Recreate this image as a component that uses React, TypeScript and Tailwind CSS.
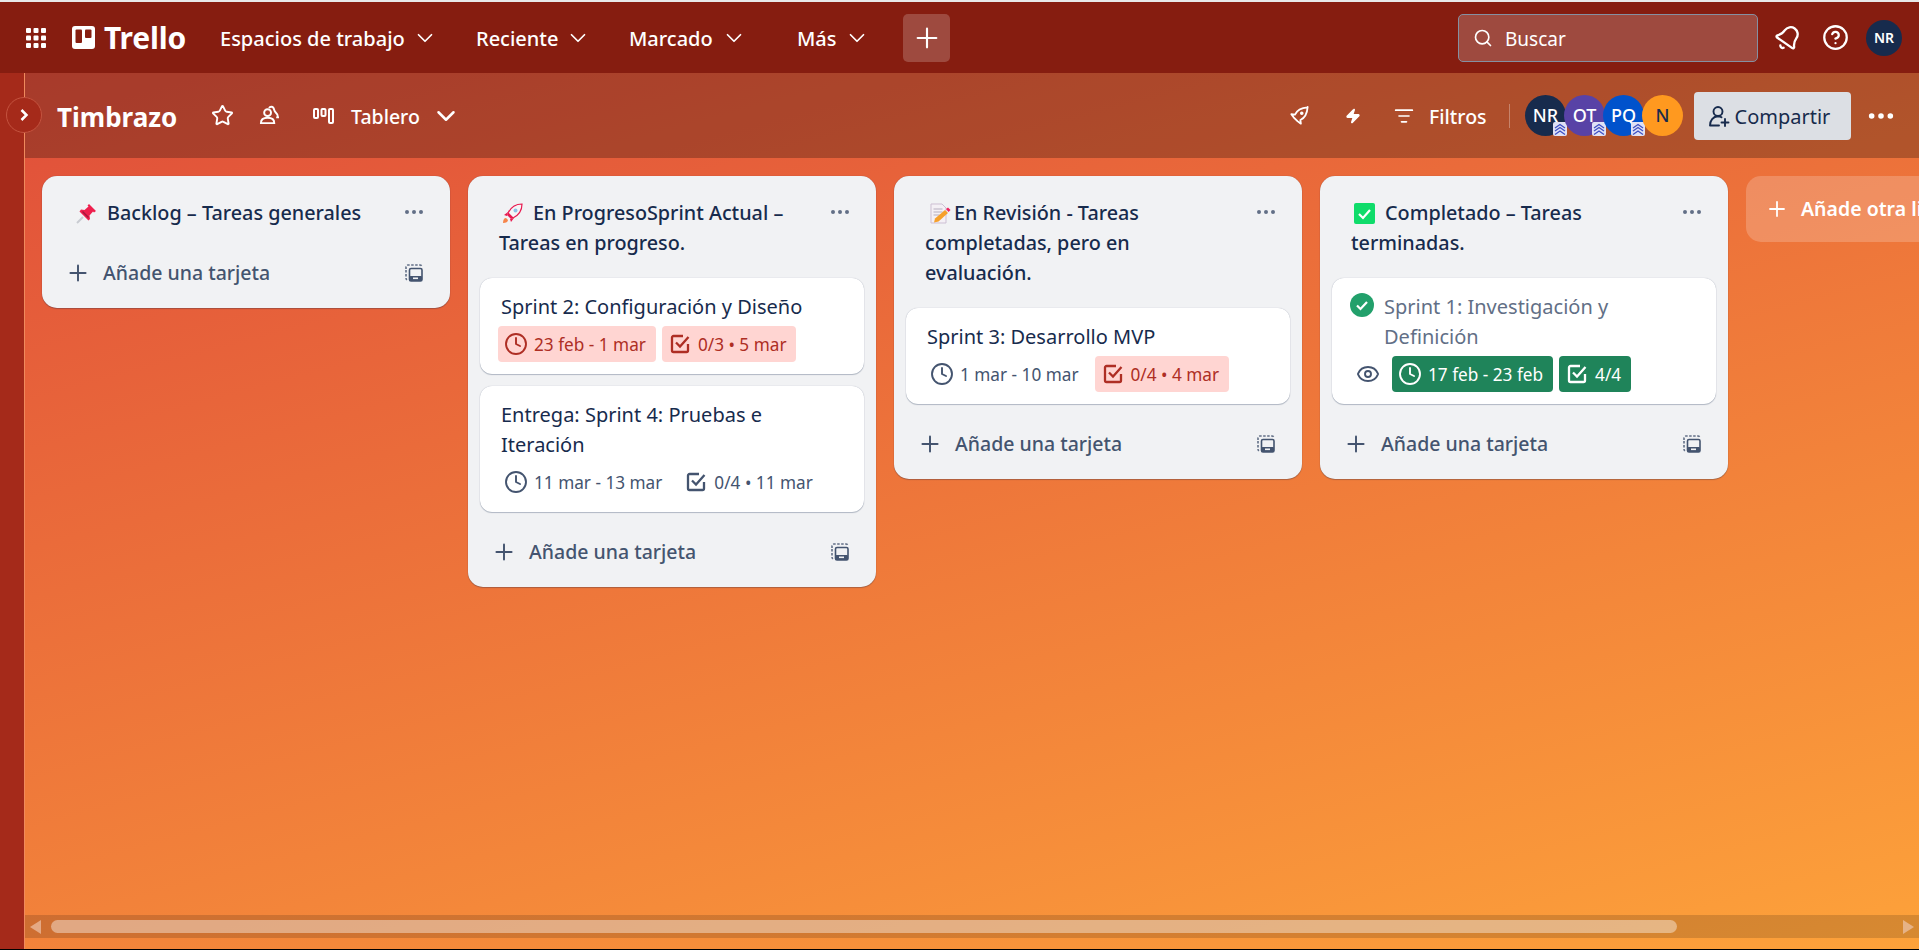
import React from "react";
import { Bell, ChevronDown, CircleHelp, Clock, Ellipsis, Eye, ListFilter, Plus, Search, Star, Zap } from "lucide-react";

const GridIcon = () => (
    <svg width="20" height="20" viewBox="0 0 20 20" fill="#fff" className="shrink-0">
        {[0, 7.5, 15].map((y) =>
            [0, 7.5, 15].map((x) => <rect key={`${x}-${y}`} x={x} y={y} width="5" height="5" rx="1" />)
        )}
    </svg>
);

const TrelloLogo = () => (
    <svg width="23" height="23" viewBox="0 0 23 23" className="shrink-0">
        <rect width="23" height="23" rx="3" fill="#fff" />
        <rect x="3.5" y="3.5" width="6.5" height="13.5" rx="1" fill="#861d10" />
        <rect x="13" y="3.5" width="6.5" height="8.5" rx="1" fill="#861d10" />
    </svg>
);

const BoardIcon = () => (
    <svg width="21" height="16" viewBox="0 0 21 16" fill="none" stroke="#fff" strokeWidth="2" className="shrink-0">
        <rect x="1" y="1" width="4" height="9" rx="1" />
        <rect x="8.5" y="1" width="4" height="7" rx="1" />
        <rect x="16" y="1" width="4" height="14" rx="1" />
    </svg>
);

const PeopleIcon = () => (
    <svg width="21" height="21" viewBox="0 0 22 22" fill="none" stroke="#fff" strokeWidth="2" className="shrink-0">
        <circle cx="9" cy="8" r="3.6" />
        <path d="M2 19c0-3.6 3-5.6 7-5.6s7 2 7 5.6z" />
        <path d="M10.5 3.2c1-1.6 3.5-1.8 4.6-.2 1 1.5.6 3 2 4.300 1.400 1.300 3 3 2.900 5.700h-2" />
    </svg>
);

const RocketIcon = () => (
    <svg width="19" height="19" viewBox="0 0 21 21" fill="none" stroke="#fff" strokeWidth="2" strokeLinejoin="round" className="shrink-0">
        <path d="M19.500 1.500C13 2 7.500 5 5.500 9.500L1.500 9l2.500 3.500 4.500 4.500 3.500 2.500-.5-4c4.500-2 7.500-7.500 8-14.500z" />
        <circle cx="13" cy="8" r="1" fill="#fff" />
    </svg>
);

const ShareIcon = () => (
    <svg width="24" height="24" viewBox="0 0 24 24" fill="none" stroke="#172b4d" strokeWidth="1.900" strokeLinecap="round" className="shrink-0">
        <circle cx="11" cy="7.500" r="4.500" />
        <path d="M3 21.500c0-5 3-9 8-9.200 1.500 0 2.500.4 3.500 1M3 21.500h9" />
        <path d="M18 15v7M14.500 18.500h7" />
    </svg>
);

const CheckIcon = () => (
    <svg width="24" height="24" viewBox="0 0 24 24" fill="none" stroke="currentColor" strokeWidth="2.300" className="shrink-0">
        <path d="M15 4H5.500A1.500 1.500 0 0 0 4 5.500v13A1.500 1.500 0 0 0 5.500 20h13a1.500 1.500 0 0 0 1.500-1.500V12" />
        <path d="M8 10.500l4 4 8.500-9.500" />
    </svg>
);

const TemplateIcon = () => (
    <svg width="18" height="18" viewBox="0 0 18 18" fill="none" className="shrink-0">
        <path d="M1 5V3a2 2 0 0 1 2-2h12a2 2 0 0 1 2 2" stroke="#626f86" strokeWidth="1.600" strokeDasharray="2.500 1.500" />
        <path d="M1 6v8a3 3 0 0 0 .8 2" stroke="#626f86" strokeWidth="1.600" strokeDasharray="2.500 1.500" />
        <rect x="4.500" y="4.500" width="12.500" height="12.500" rx="1.500" stroke="#44546f" strokeWidth="1.600" />
        <rect x="4.500" y="12" width="12.500" height="5" rx="1" fill="#44546f" />
        <rect x="8" y="13.500" width="5" height="1.600" fill="#f1f2f4" />
    </svg>
);

const PinEmoji = () => (
    <svg width="21" height="21" viewBox="0 0 21 21" className="inline-block align-[-4px] ml-[3px] mr-[10px]">
        <path d="M1 20l6-6" stroke="#c9ccd1" strokeWidth="2" />
        <path d="M13 1l7 7-2 1.500-1-1-3.500 4 .5 3.500-1.500 1.500-9-9L5 6.500l3.500.5 4-3.500-1-1z" fill="#ee1f4d" />
        <path d="M7 8l6 6-1 1-6-6z" fill="#a3173d" />
    </svg>
);

const RocketEmoji = () => (
    <svg width="21" height="21" viewBox="0 0 21 21" className="inline-block align-[-4px] ml-[3px] mr-[10px]">
        <path d="M1 20c0-3 1-5 3-5l2 2c0 2-2 3-5 3z" fill="#f6854a" />
        <path d="M20 1c-6 0-11 3-14 9l5 5c6-3 9-8 9-14z" fill="#f5f5f7" stroke="#e8194f" strokeWidth="1.200" />
        <path d="M6 9L2 12l3 1zM12 15l-3 4-1-3z" fill="#e8194f" />
        <path d="M6 10l5 5-2 1-4-4z" fill="#e8194f" />
        <circle cx="13.500" cy="7.500" r="2" fill="#8fc3e8" />
    </svg>
);

const NoteEmoji = () => (
    <svg width="21" height="21" viewBox="0 0 21 21" className="inline-block align-[-4px] ml-[5px] mr-[3px]">
        <path d="M1 1h11l4 4v15H1z" fill="#f4f0f5" stroke="#cdbfd3" />
        <path d="M3.500 6h9M3.500 9h9M3.500 12h6" stroke="#b6adc0" strokeWidth="1.200" />
        <path d="M5 15.500L15 7l3 3-9.500 8.500-4.500 1z" fill="#f6a02b" />
        <path d="M16 6l2-1.500 2.500 2.500-2 2z" fill="#f0245e" />
    </svg>
);

const CheckEmoji = () => (
    <svg width="21" height="21" viewBox="0 0 21 21" className="inline-block align-[-4px] ml-[3px] mr-[10px]">
        <rect width="21" height="21" rx="2" fill="#0fdc6a" />
        <path d="M5 11l4 4 7-8" fill="none" stroke="#fff" strokeWidth="2.200" />
    </svg>
);

const AdminBadge = () => (
    <svg width="14" height="14" viewBox="0 0 14 14" className="absolute right-[-1px] bottom-0">
        <rect width="14" height="14" rx="2" fill="#dfe1f5" />
        <path d="M2 6l5-3.500L12 6M2 9l5-3.500L12 9M2 12.500L7 9l5 3.500" fill="none" stroke="#3f51c4" strokeWidth="1.400" />
    </svg>
);

const Avatar = ({ label, color, dark, admin }: { label: string; color: string; dark?: boolean; admin?: boolean }) => (
    <div
        className={`relative w-[41px] h-[41px] -ml-[2px] first:ml-0 rounded-full flex items-center justify-center text-[18px] font-medium ${dark ? "text-[#172b4d]" : "text-white"}`}
        style={{ backgroundColor: color }}
    >
        {label}
        {admin && <AdminBadge />}
    </div>
);

const NavItem = ({ label, width }: { label: string; width: string }) => (
    <div className="flex items-center">
        <span className={`${width} pt-[3px] font-medium text-[20px] text-white whitespace-nowrap`}>{label}</span>
        <ChevronDown size={26} strokeWidth={1.600} className="text-white -ml-[5px]" />
    </div>
);

const Badge = ({ kind, icon, text }: { kind: "plain" | "red" | "green"; icon: "clock" | "check"; text: string }) => {
    const styles = {
        plain: "text-[#44546f]",
        red: "bg-[#ffd5d2] text-[#ae2e24]",
        green: "bg-[#1f845a] text-white",
    };
    return (
        <div className={`h-[36px] flex items-center gap-[6px] pl-[6px] pr-[10px] rounded-[4px] text-[17.200px] whitespace-nowrap ${styles[kind]}`}>
            {icon === "clock" ? <Clock size={24} strokeWidth={1.900} /> : <CheckIcon />}
            <span className="pt-[2px]">{text}</span>
        </div>
    );
};

const Card = ({ children, lines, done }: { children: React.ReactNode; lines: string[]; done?: boolean }) => (
    <div className="w-[384px] bg-white rounded-[12px] pt-[14px] pb-[12px] shadow-[0_1px_1px_#091e4240,0_0_1px_#091e424f]">
        <div className={`flex text-[20px] leading-[30px] ${done ? "text-[#626f86] pl-[18px]" : "text-[#172b4d] pl-[21px]"}`}>
            {done && (
                <svg width="24" height="24" viewBox="0 0 24 24" className="shrink-0 mr-[10px] mt-[1px]">
                    <circle cx="12" cy="12" r="12" fill="#22a06b" />
                    <path d="M7 12.500l3.500 3.500 6.500-7" fill="none" stroke="#fff" strokeWidth="2.200" />
                </svg>
            )}
            <div>
                {lines.map((l) => (
                    <div key={l}>{l}</div>
                ))}
            </div>
        </div>
        <div className="flex items-center gap-[6px] mt-[4px] pl-[18px]">{children}</div>
    </div>
);

const List = ({ title, children }: { title: React.ReactNode; children?: React.ReactNode }) => (
    <div className="w-[408px] shrink-0 self-start bg-[#f1f2f4] rounded-[15px] shadow-[0_1px_1px_#091e4240,0_0_1px_#091e424f]">
        <div className="flex pt-[22px] pb-[20px] pl-[31px] pr-[24px]">
            <div className="flex-1 pr-[24px] text-[19.800px] leading-[30px] font-medium text-[#172b4d]">{title}</div>
            <Ellipsis size={24} className="shrink-0 text-[#626f86] mt-[2px]" />
        </div>
        {children && <div className="flex flex-col gap-[12px] px-[12px] pb-[15px]">{children}</div>}
        <div className="h-[50px] mb-[10px] pl-[24px] pr-[27px] flex items-center text-[#44546f]">
            <Plus size={26} strokeWidth={1.800} className="-ml-[1px]" />
            <span className="ml-[12px] flex-1 text-[19.500px] font-medium">Añade una tarjeta</span>
            <TemplateIcon />
        </div>
    </div>
);

const App = () => {
    return (
        <div className="w-[1919px] h-[950px] flex flex-col overflow-hidden font-['Noto_Sans',sans-serif]">
            <div className="h-[2px] bg-[#e8e8e8]" />
            <header className="h-[71px] bg-[#861d10] flex items-center pl-[26px] pr-[17px] text-white">
                <GridIcon />
                <div className="ml-[26px]">
                    <TrelloLogo />
                </div>
                <span className="ml-[9px] w-[116px] text-[30px] font-bold tracking-[-0.200px] whitespace-nowrap">Trello</span>
                <NavItem label="Espacios de trabajo" width="w-[197px]" />
                <div className="ml-[38px]">
                    <NavItem label="Reciente" width="w-[94px]" />
                </div>
                <div className="ml-[38px]">
                    <NavItem label="Marcado" width="w-[97px]" />
                </div>
                <div className="ml-[50px]">
                    <NavItem label="Más" width="w-[52px]" />
                </div>
                <div className="ml-[33px] w-[47px] h-[48px] rounded-[5px] bg-white/20 flex items-center justify-center">
                    <Plus size={32} strokeWidth={1.600} />
                </div>
                <div className="ml-auto w-[300px] h-[48px] rounded-[5px] bg-white/20 border border-[#8590a2] flex items-center pl-[14px] text-[19px]">
                    <Search size={20} strokeWidth={2} />
                    <span className="ml-[12px] pt-[3px]">Buscar</span>
                </div>
                <Bell size={28} strokeWidth={2} className="ml-[16px] rotate-[35deg]" />
                <CircleHelp size={27} strokeWidth={2} className="ml-[20px]" />
                <div className="ml-[17px] w-[36px] h-[36px] rounded-full bg-[#172b4d] flex items-center justify-center text-[14px] font-semibold">NR</div>
            </header>
            <div className="flex-1 flex min-h-0 relative">
                <aside className="w-[25px] shrink-0 bg-[#a52a1a] border-r border-[#f08a5d]" />
                <button className="absolute left-[6px] top-[24px] w-[36px] h-[36px] rounded-full bg-[#a52a1a] border border-[#c4533f] flex items-center justify-center">
                    <svg width="10" height="14" viewBox="0 0 10 14" fill="none" stroke="#fff" strokeWidth="2.500">
                        <path d="M2.500 2l5 5-5 5" />
                    </svg>
                </button>
                <main className="flex-1 min-w-0 flex flex-col bg-[linear-gradient(165deg,#e04e3a_0%,#fda23a_100%)]">
                    <div className="h-[85px] shrink-0 bg-black/25 flex items-center pl-[32px] pr-[22.500px] text-white">
                        <span className="w-[119px] pt-[3px] text-[26px] font-bold whitespace-nowrap">Timbrazo</span>
                        <Star size={23} strokeWidth={2} className="ml-[35px]" />
                        <div className="ml-[25px]">
                            <PeopleIcon />
                        </div>
                        <div className="ml-[33px]">
                            <BoardIcon />
                        </div>
                        <span className="ml-[17px] w-[72px] pt-[3px] text-[19.500px] font-medium">Tablero</span>
                        <ChevronDown size={30} strokeWidth={2} className="ml-[8px]" />
                        <div className="ml-auto">
                            <RocketIcon />
                        </div>
                        <Zap size={16} strokeWidth={2} fill="#fff" className="ml-[36px]" />
                        <ListFilter size={20} strokeWidth={2} className="ml-[33px]" />
                        <span className="ml-[15px] w-[58px] pt-[3px] text-[19.500px] font-medium">Filtros</span>
                        <div className="ml-[22px] w-px h-[24px] bg-white/30" />
                        <div className="ml-[15px] flex items-center">
                            <Avatar label="NR" color="#172b4d" admin />
                            <Avatar label="OT" color="#5842a6" admin />
                            <Avatar label="PQ" color="#0052cc" admin />
                            <Avatar label="N" color="#ff991f" dark />
                        </div>
                        <div className="ml-[10.500px] w-[157px] h-[48px] rounded-[4px] bg-[#dcdfe4] text-[#172b4d] flex items-center pl-[13px] text-[20px]">
                            <ShareIcon />
                            <span className="ml-[4px] pt-[2px]">Compartir</span>
                        </div>
                        <Ellipsis size={32} strokeWidth={2.200} className="ml-[14px]" />
                    </div>
                    <div className="flex-1 min-h-0 overflow-hidden flex gap-[18px] pt-[18px] pl-[17px]">
                        <List title={<><PinEmoji />Backlog – Tareas generales</>} />
                        <List title={<><RocketEmoji />En ProgresoSprint Actual – Tareas en progreso.</>}>
                            <Card lines={["Sprint 2: Configuración y Diseño"]}>
                                <Badge kind="red" icon="clock" text="23 feb - 1 mar" />
                                <Badge kind="red" icon="check" text="0/3 • 5 mar" />
                            </Card>
                            <Card lines={["Entrega: Sprint 4: Pruebas e", "Iteración"]}>
                                <Badge kind="plain" icon="clock" text="11 mar - 13 mar" />
                                <Badge kind="plain" icon="check" text="0/4 • 11 mar" />
                            </Card>
                        </List>
                        <List title={<><NoteEmoji />En Revisión - Tareas completadas, pero en evaluación.</>}>
                            <Card lines={["Sprint 3: Desarrollo MVP"]}>
                                <Badge kind="plain" icon="clock" text="1 mar - 10 mar" />
                                <Badge kind="red" icon="check" text="0/4 • 4 mar" />
                            </Card>
                        </List>
                        <List title={<><CheckEmoji />Completado – Tareas terminadas.</>}>
                            <Card lines={["Sprint 1: Investigación y", "Definición"]} done>
                                <Eye size={24} strokeWidth={1.900} className="mx-[6px] text-[#44546f]" />
                                <Badge kind="green" icon="clock" text="17 feb - 23 feb" />
                                <Badge kind="green" icon="check" text="4/4" />
                            </Card>
                        </List>
                        <div className="w-[408px] h-[66px] shrink-0 rounded-[15px] bg-white/20 flex items-center pl-[19px] text-white text-[19.500px] font-semibold">
                            <Plus size={24} strokeWidth={1.800} />
                            <span className="ml-[12px] whitespace-nowrap">Añade otra lista</span>
                        </div>
                    </div>
                    <div className="h-[23px] shrink-0 mb-[11px] bg-black/15 flex items-center pl-[5px] pr-[5px]">
                        <div className="w-0 h-0 border-y-[7px] border-y-transparent border-r-[11px] border-r-[#e4a883]" />
                        <div className="ml-[10px] w-[1626px] h-[13px] rounded-full bg-white/40" />
                        <div className="ml-auto w-0 h-0 border-y-[7px] border-y-transparent border-l-[11px] border-l-[#e6b286]" />
                    </div>
                </main>
            </div>
            <div className="h-px bg-black" />
        </div>
    );
};

export default App;
